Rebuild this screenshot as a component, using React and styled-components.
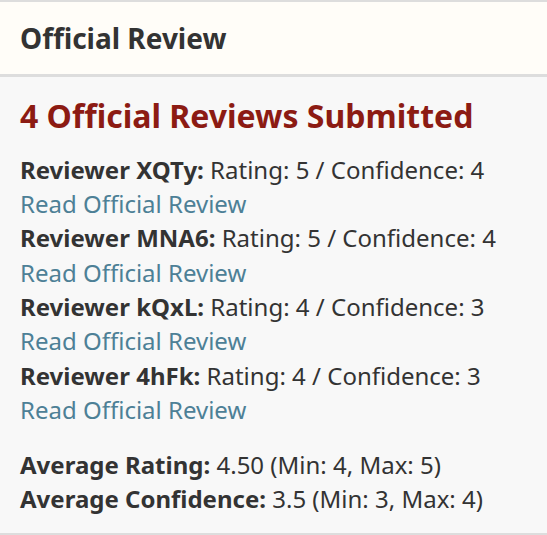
import React from "react";
import styled, { createGlobalStyle } from "styled-components";

const GlobalStyle = createGlobalStyle`
  body {
    margin: 0;
    background: #fff;
    font-family: "Noto Sans", "Open Sans", sans-serif;
    color: #333;
  }
`;

const Panel = styled.section`
  width: 547px;
  border-top: 2px solid #dddddd;
  border-bottom: 2px solid #dddddd;
`;

const Header = styled.header`
  height: 75px;
  box-sizing: border-box;
  display: flex;
  align-items: center;
  padding: 0 20px;
  background: #fffdf8;
  border-bottom: 3px solid #dddddd;
`;

const HeaderTitle = styled.h2`
  margin: 0;
  font-size: 28px;
  font-weight: 700;
  color: #333;
`;

const Body = styled.div`
  background: #f8f8f8;
  padding: 17px 20px 16px;
`;

const Title = styled.h3`
  margin: 0 0 14px;
  font-size: 32px;
  font-weight: 700;
  color: #8c1b13;
  line-height: 1.4;
`;

const Line = styled.div`
  font-size: 24px;
  line-height: 34.3px;
  color: #333;
`;

const Label = styled.strong`
  font-weight: 700;
`;

const ReviewLink = styled.a`
  display: block;
  font-size: 24px;
  line-height: 34.3px;
  color: #4d8096;
  text-decoration: none;
`;

const Summary = styled.div`
  margin-top: 21px;
`;

const reviews = [
  { id: "XQTy", rating: 5, confidence: 4 },
  { id: "MNA6", rating: 5, confidence: 4 },
  { id: "kQxL", rating: 4, confidence: 3 },
  { id: "4hFk", rating: 4, confidence: 3 },
];

export default function App() {
  return (
    <>
      <GlobalStyle />
      <Panel>
        <Header>
          <HeaderTitle>Official Review</HeaderTitle>
        </Header>
        <Body>
          <Title>4 Official Reviews Submitted</Title>
          {reviews.map((r) => (
            <div key={r.id}>
              <Line>
                <Label>Reviewer {r.id}:</Label> Rating: {r.rating} / Confidence:{" "}
                {r.confidence}
              </Line>
              <ReviewLink href="#">Read Official Review</ReviewLink>
            </div>
          ))}
          <Summary>
            <Line>
              <Label>Average Rating:</Label> 4.50 (Min: 4, Max: 5)
            </Line>
            <Line>
              <Label>Average Confidence:</Label> 3.5 (Min: 3, Max: 4)
            </Line>
          </Summary>
        </Body>
      </Panel>
    </>
  );
}
